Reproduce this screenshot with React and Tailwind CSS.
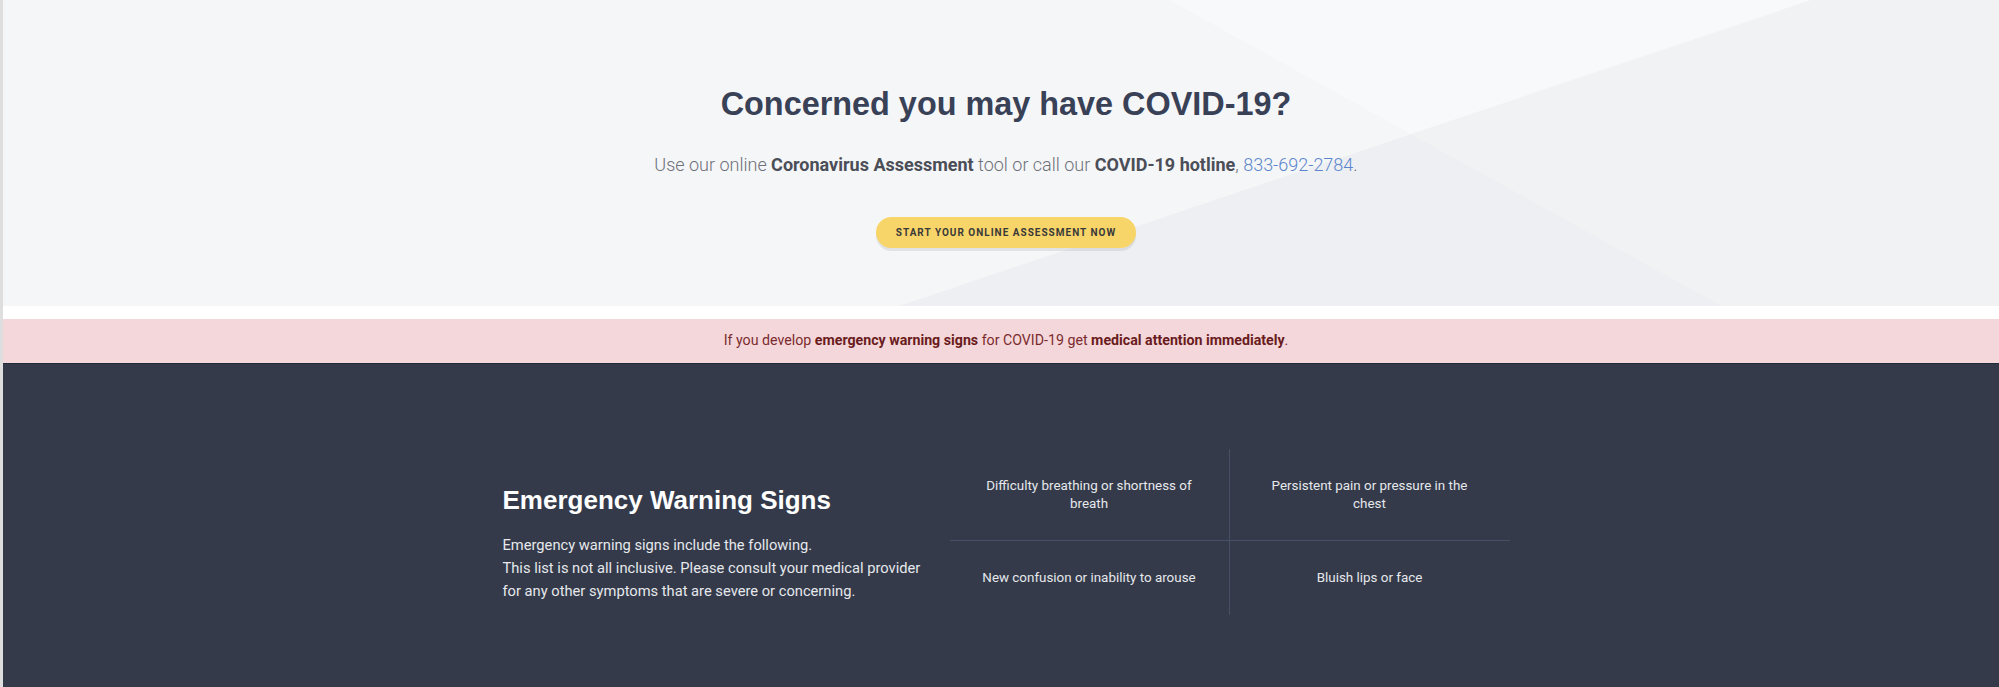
const signs = [
  { text: ['Difficulty breathing or shortness of', 'breath'], cls: 'border-r border-b h-[92px]' },
  { text: ['Persistent pain or pressure in the', 'chest'], cls: 'border-b h-[92px]' },
  { text: ['New confusion or inability to arouse'], cls: 'border-r h-[74px]' },
  { text: ['Bluish lips or face'], cls: 'h-[74px]' },
];

const HeroShapes = () => (
  <svg className="absolute inset-0 w-full h-full" viewBox="0 0 1996 306" preserveAspectRatio="none">
    <polygon points="1166,0 1808,0 1408,134" fill="#ffffff" opacity="0.35" />
    <polygon points="1808,0 1996,0 1996,306 896,306" fill="#1e293b" opacity="0.018" />
    <polygon points="1408,134 1719,306 896,306" fill="#1e293b" opacity="0.012" />
  </svg>
);

export default function App() {
  return (
    <div className="min-h-screen bg-white border-l-[3px] border-[#dedede]" style={{ fontFamily: 'Roboto, "Liberation Sans", sans-serif' }}>
      {/* hero */}
      <section className="relative h-[306px] bg-[#f5f6f8] overflow-hidden">
        <HeroShapes />
        <div className="relative flex flex-col items-center pt-[84px] pl-[10px]">
          <h1 className="text-[32.4px] leading-[40px] font-bold text-[#394157]" style={{ fontFamily: '"Liberation Sans", Arial, sans-serif' }}>
            Concerned you may have COVID-19?
          </h1>
          <p className="mt-[27px] text-[18px] leading-[28px] font-light text-[#6d7079]">
            Use our online <span className="font-bold text-[#4b4e57]">Coronavirus Assessment</span> tool or call our{' '}
            <span className="font-bold text-[#4b4e57]">COVID-19 hotline</span>,{' '}
            <a href="#" className="text-[#5b86cc]">833-692-2784</a>.
          </p>
          <button className="mt-[38px] h-[31px] px-[20px] rounded-full bg-[#f8d568] shadow-[0_3px_0_rgba(0,0,0,0.08)] text-[10px] font-bold tracking-[1px] uppercase text-[#3a3a3a]">
            Start your online assessment now
          </button>
        </div>
      </section>

      <div className="h-[13px] bg-white" />

      {/* warning bar */}
      <div className="h-[45px] flex items-center justify-center pl-[10px] bg-[#f4d7da] border-b border-[#1f2b3a] text-[14.2px] text-[#7b2b2f]">
        <p>
          If you develop <span className="font-bold text-[#6a1b20]">emergency warning signs</span> for COVID-19 get{' '}
          <span className="font-bold text-[#6a1b20]">medical attention immediately</span>.
        </p>
      </div>

      {/* emergency signs */}
      <section className="bg-[#343a4a] h-[323px] pt-[85px] pl-[10px]">
        <div className="w-[1007px] mx-auto flex">
          <div className="w-[447px] mt-[36px] text-white">
            <h2 className="text-[26px] leading-[30px] font-bold" style={{ fontFamily: '"Liberation Sans", Arial, sans-serif' }}>
              Emergency Warning Signs
            </h2>
            <p className="mt-[19px] text-[14.7px] leading-[23px] text-[#e6e8ec]">
              Emergency warning signs include the following.
              <br />
              This list is not all inclusive. Please consult your medical provider
              <br />
              for any other symptoms that are severe or concerning.
            </p>
          </div>
          <div className="w-[560px] grid grid-cols-2">
            {signs.map((s, i) => (
              <div
                key={i}
                className={`${s.cls} border-[#465168] flex justify-center pt-[28px] text-center text-[13.4px] leading-[18px] text-[#e6e8ec]`}
              >
                <p>
                  {s.text.map((line, j) => (
                    <span key={j} className="block">{line}</span>
                  ))}
                </p>
              </div>
            ))}
          </div>
        </div>
      </section>
    </div>
  );
}
